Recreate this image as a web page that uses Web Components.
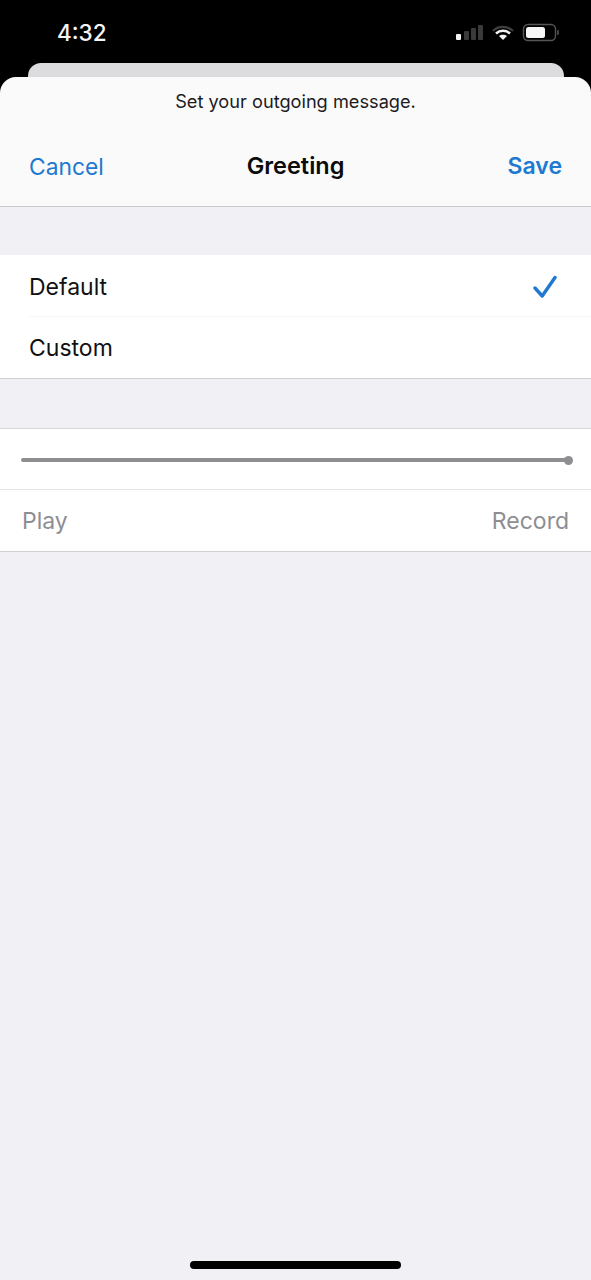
<!DOCTYPE html>
<html>
<head>
<meta charset="utf-8">
<title>Greeting</title>
<style>
    html, body { margin: 0; padding: 0; background: #f0f0f5; }
    body { font-family: Inter, "Liberation Sans", sans-serif; }
</style>
</head>
<body>
<phone-screen>
    <status-bar time="4:32"></status-bar>
    <sheet-header prompt="Set your outgoing message." title="Greeting"></sheet-header>
    <section-gap short></section-gap>
    <option-list>
        <option-row checked>Default</option-row>
        <option-row>Custom</option-row>
    </option-list>
    <section-gap></section-gap>
    <greeting-player></greeting-player>
    <home-bar></home-bar>
</phone-screen>

<script>
class PhoneScreen extends HTMLElement {
    constructor() {
        super();
        this.attachShadow({ mode: "open" }).innerHTML = `
        <style>
            :host {
                display: flex;
                flex-direction: column;
                height: 1280px;
                width: 591px;
                background: #f0f0f5;
                overflow: hidden;
            }
        </style>
        <slot></slot>`;
    }
}

class StatusBar extends HTMLElement {
    constructor() {
        super();
        this.attachShadow({ mode: "open" }).innerHTML = `
        <style>
            :host { display: block; background: #000; height: 77px; }
            .row {
                display: flex;
                align-items: center;
                justify-content: space-between;
                height: 63px;
                padding: 3px 30px 0 57px;
                box-sizing: border-box;
            }
            .time { color: #f4f4f4; font-size: 22.5px; font-weight: 500; padding-bottom: 2px; }
            svg { display: block; margin-bottom: 1px; }
            .peek {
                height: 14px;
                margin: 0 27px 0 28px;
                background: #dcdcde;
                border-radius: 13px 13px 0 0;
            }
        </style>
        <div class="row">
            <span class="time"></span>
            <svg width="105" height="20" viewBox="0 0 105 20">
                <rect x="0" y="11" width="5" height="6" rx="1" fill="#f2f2f2"/>
                <rect x="8" y="8" width="5" height="9" rx="1" fill="#3a3a3a"/>
                <rect x="15" y="5" width="5" height="12" rx="1" fill="#3a3a3a"/>
                <rect x="22" y="2" width="5" height="15" rx="1" fill="#3a3a3a"/>
                <path d="M37 8 C42 2.6 52 2.6 57 8" fill="none" stroke="#3f3f3f" stroke-width="2.2"/>
                <path d="M40 10.5 C44 6.8 50 6.8 54 10.5" fill="none" stroke="#f2f2f2" stroke-width="2.4"/>
                <path d="M47 17 L43 13 C45 11.4 49 11.4 51 13 Z" fill="#f2f2f2"/>
                <rect x="67.5" y="1.5" width="32" height="16" rx="4.5" fill="none" stroke="#555" stroke-width="1.4"/>
                <rect x="70" y="4" width="19" height="11" rx="2.5" fill="#f5f5f5"/>
                <rect x="101" y="7" width="2" height="5" rx="1" fill="#444"/>
            </svg>
        </div>
        <div class="peek"></div>`;
        this.shadowRoot.querySelector(".time").textContent = this.getAttribute("time");
    }
}

class SheetHeader extends HTMLElement {
    constructor() {
        super();
        this.attachShadow({ mode: "open" }).innerHTML = `
        <style>
            :host {
                display: block;
                background: #000;
            }
            .sheet {
                background: #fafafb;
                border-radius: 16px 16px 0 0;
                border-bottom: 1px solid #c9c9cc;
                height: 130px;
                box-sizing: border-box;
            }
            .prompt {
                text-align: center;
                color: #1c1c1e;
                font-size: 18.2px;
                line-height: 22px;
                padding-top: 13px;
            }
            .nav {
                display: flex;
                align-items: center;
                padding: 0 29px;
                margin-top: 35px;
                height: 36px;
            }
            .title { color: #0b0b0b; font-weight: 600; font-size: 23.5px; }
            .action { flex: 1; color: #2079cf; font-size: 22.8px; margin-top: 2px; }
            .save { font-size: 23px; font-weight: 600; text-align: right; }
        </style>
        <div class="sheet">
            <div class="prompt"></div>
            <div class="nav">
                <span class="action">Cancel</span>
                <span class="title"></span>
                <span class="action save">Save</span>
            </div>
        </div>`;
        this.shadowRoot.querySelector(".prompt").textContent = this.getAttribute("prompt");
        this.shadowRoot.querySelector(".title").textContent = this.getAttribute("title");
        this.removeAttribute("title");
    }
}

class SectionGap extends HTMLElement {
    constructor() {
        super();
        this.attachShadow({ mode: "open" }).innerHTML = `
        <style>
            :host { display: block; height: 49px; background: #f0f0f5; }
            :host([short]) { height: 48px; }
        </style>`;
    }
}

class OptionList extends HTMLElement {
    constructor() {
        super();
        this.attachShadow({ mode: "open" }).innerHTML = `
        <style>
            :host {
                display: block;
                background: #fff;
                border-bottom: 1px solid #cfcfd2;
            }
        </style>
        <slot></slot>`;
    }
}

class OptionRow extends HTMLElement {
    constructor() {
        super();
        const check = this.hasAttribute("checked")
            ? `<svg width="24" height="24" viewBox="0 0 24 24"><path d="M2 13 L9.2 21 L22 2.5" fill="none" stroke="#2079cf" stroke-width="3.4" stroke-linecap="round" stroke-linejoin="round"/></svg>`
            : "";
        this.attachShadow({ mode: "open" }).innerHTML = `
        <style>
            :host { display: block; padding-left: 29px; }
            :host(:not(:last-child)) .row { height: 62px; padding-top: 3px; border-bottom: 1px solid #f5f5f7; }
            .row {
                display: flex;
                align-items: center;
                justify-content: space-between;
                height: 61px;
                padding-top: 1px;
                box-sizing: border-box;
                padding-right: 34px;
                color: #111;
                font-size: 23px;
            }
            svg { display: block; }
        </style>
        <div class="row"><span><slot></slot></span>${check}</div>`;
    }
}

class GreetingPlayer extends HTMLElement {
    constructor() {
        super();
        this.attachShadow({ mode: "open" }).innerHTML = `
        <style>
            :host {
                display: block;
                background: #fff;
                border-top: 1px solid #d6d6d9;
                border-bottom: 1px solid #cfcfd2;
            }
            .track {
                display: flex;
                align-items: center;
                height: 61px;
                padding: 2px 18px 0 21px;
                box-sizing: border-box;
                border-bottom: 1px solid #e4e4e6;
            }
            .line { flex: 1; height: 4px; background: #8e8e90; border-radius: 2px; }
            .knob { width: 9px; height: 9px; margin-left: -4px; border-radius: 50%; background: #8e8e90; }
            .buttons {
                display: flex;
                align-items: center;
                justify-content: space-between;
                height: 61px;
                padding: 0 22px;
                color: #8e8e92;
                font-size: 23px;
            }
        </style>
        <div class="track"><div class="line"></div><div class="knob"></div></div>
        <div class="buttons"><span>Play</span><span>Record</span></div>`;
    }
}

class HomeBar extends HTMLElement {
    constructor() {
        super();
        this.attachShadow({ mode: "open" }).innerHTML = `
        <style>
            :host {
                display: flex;
                justify-content: center;
                margin-top: auto;
                padding-bottom: 11px;
            }
            .pill { width: 211px; height: 8px; border-radius: 4px; background: #000; }
        </style>
        <div class="pill"></div>`;
    }
}

customElements.define("phone-screen", PhoneScreen);
customElements.define("status-bar", StatusBar);
customElements.define("sheet-header", SheetHeader);
customElements.define("section-gap", SectionGap);
customElements.define("option-list", OptionList);
customElements.define("option-row", OptionRow);
customElements.define("greeting-player", GreetingPlayer);
customElements.define("home-bar", HomeBar);
</script>
</body>
</html>
